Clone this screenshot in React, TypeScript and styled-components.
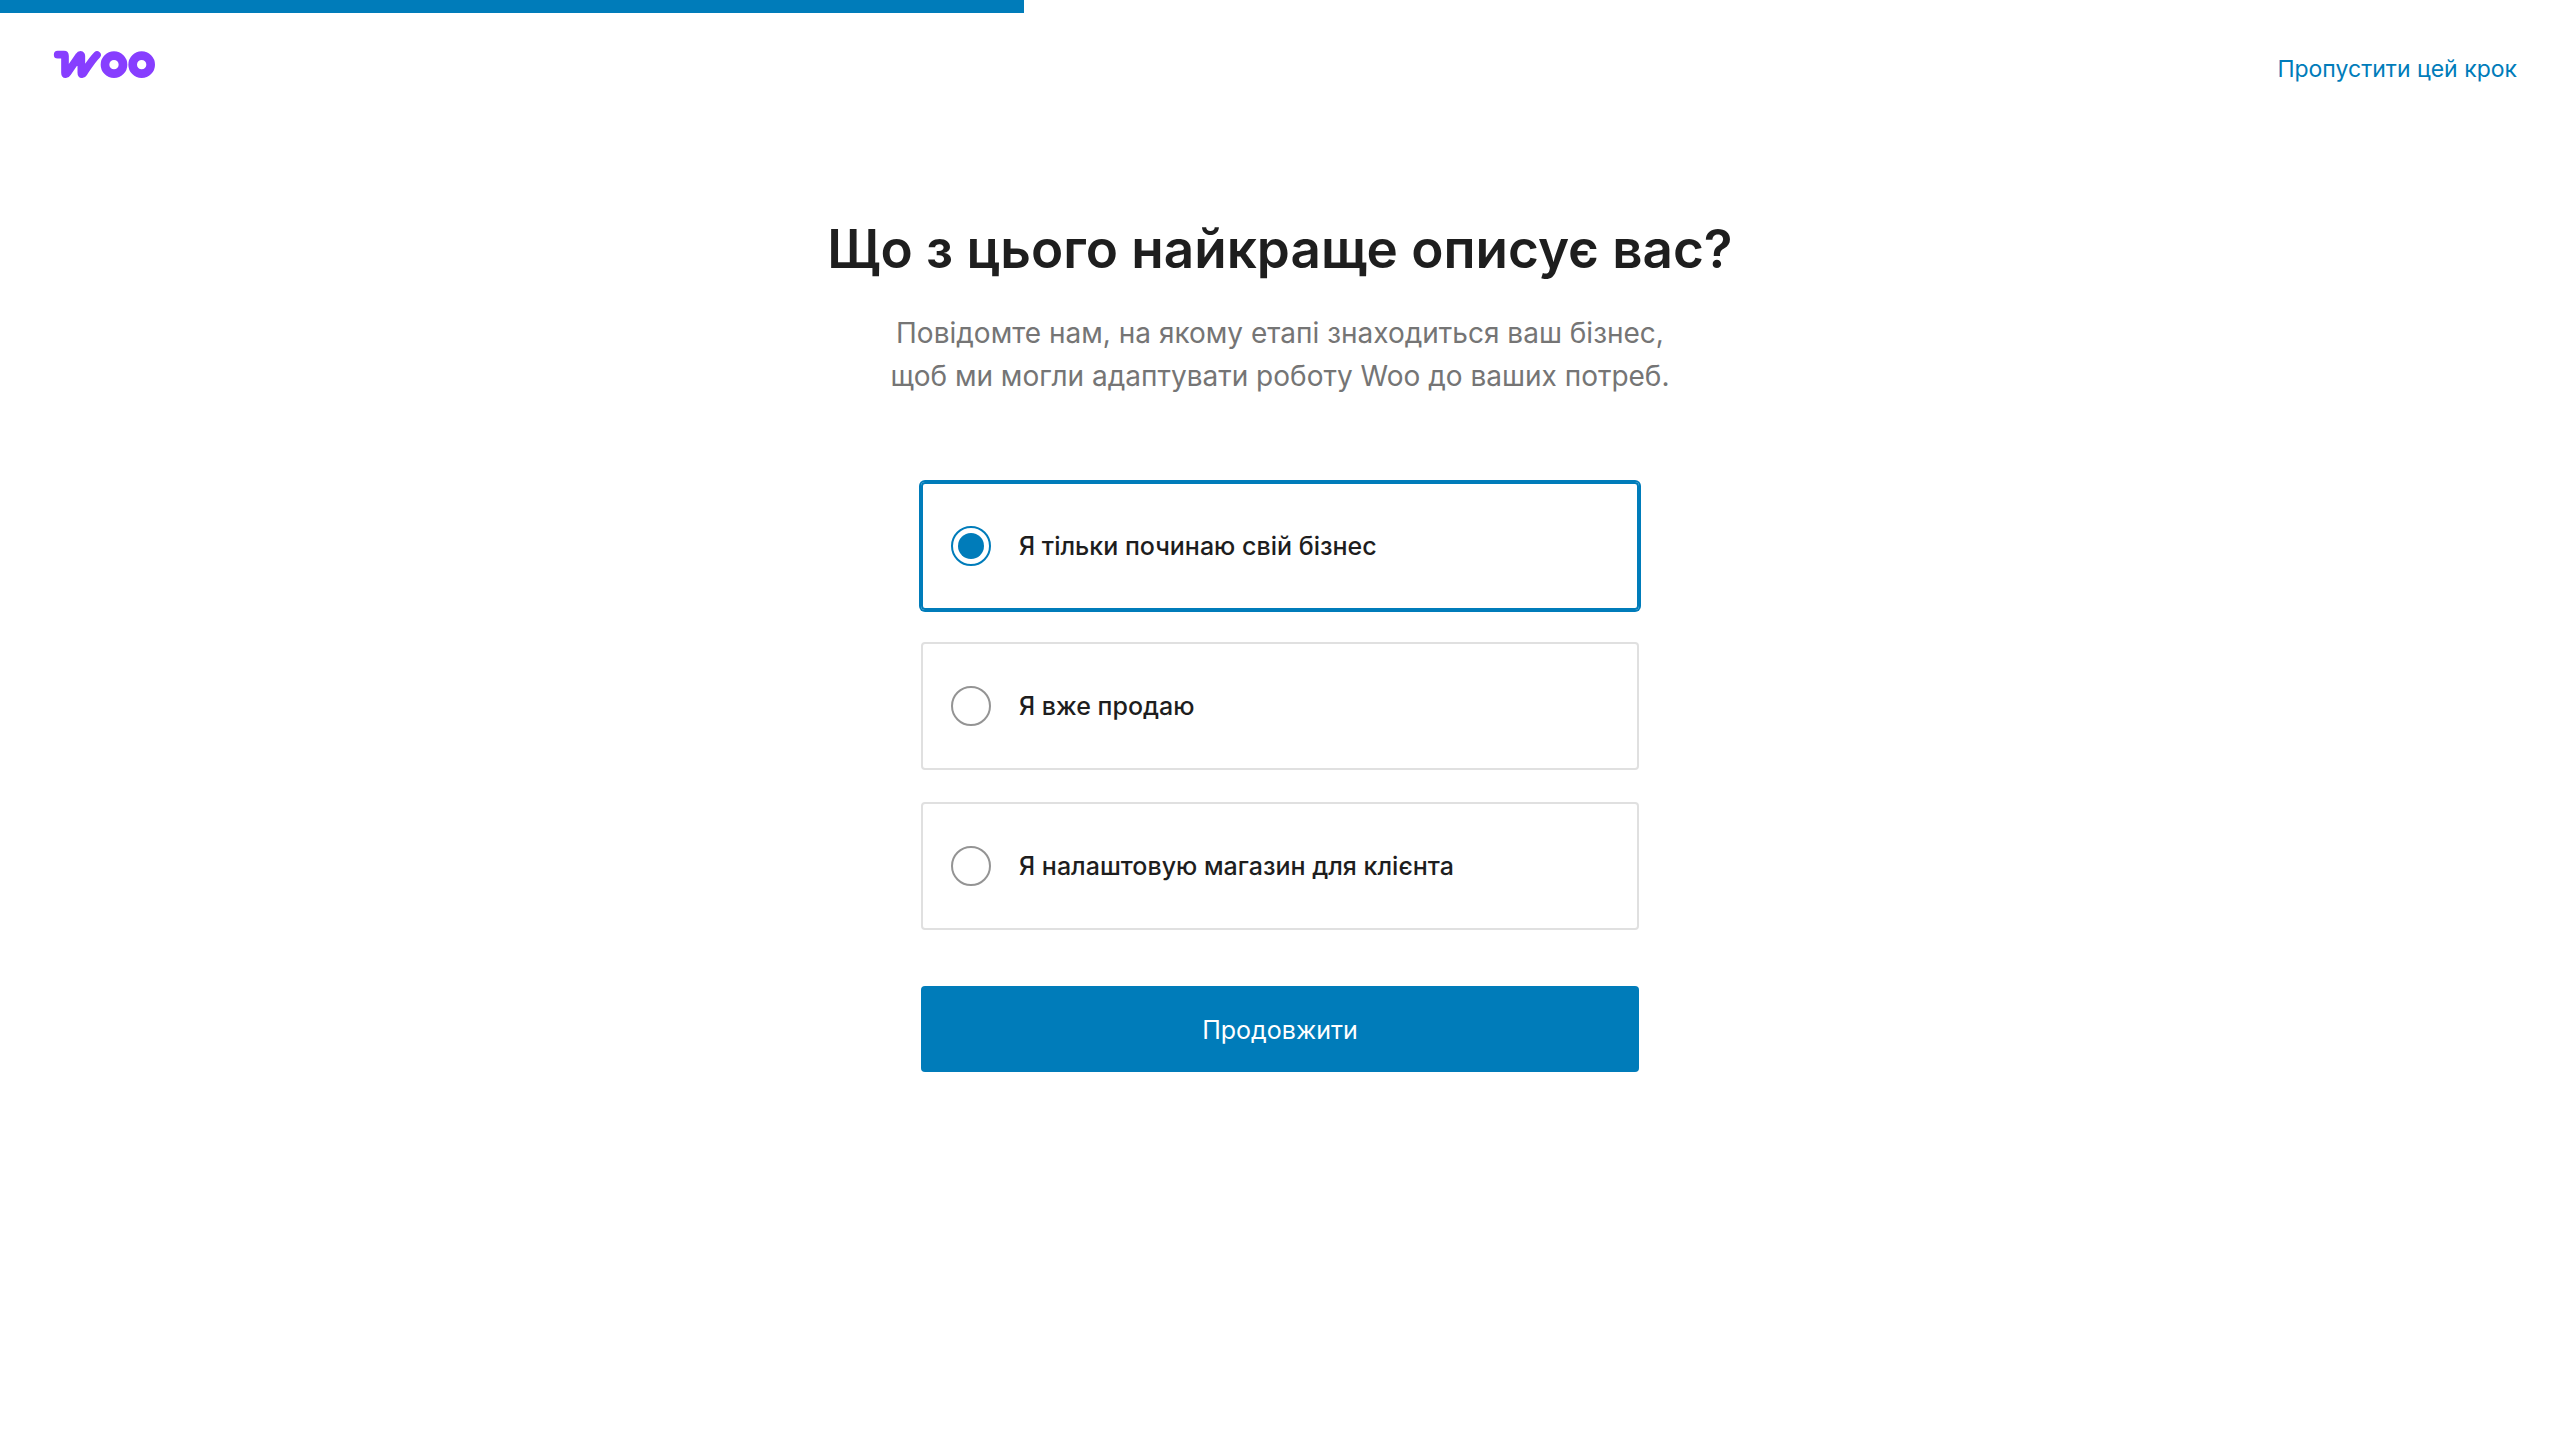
import React, { useState } from "react";
import styled, { createGlobalStyle } from "styled-components";

const blue = "#007cba";
const ink = "#1e1e1e";

const GlobalStyle = createGlobalStyle`
  *, *::before, *::after { box-sizing: border-box; }
  body {
    margin: 0;
    background: #fff;
    color: ${ink};
    font-family: Inter, "Liberation Sans", sans-serif;
  }
`;

const Progress = styled.div`
  height: 13px;
`;

const ProgressFill = styled.div<{ $percent: number }>`
  width: ${(p) => p.$percent}%;
  height: 100%;
  background: ${blue};
`;

const Header = styled.header`
  display: flex;
  justify-content: space-between;
  align-items: flex-start;
  padding: 37px 43px 0 53px;
`;

const Logo = styled.svg`
  display: block;
  width: 103px;
  height: 29px;
`;

const SkipLink = styled.a`
  color: ${blue};
  font-size: 23px;
  line-height: 38px;
  text-decoration: none;
`;

const Main = styled.main`
  display: flex;
  flex-direction: column;
  align-items: center;
  padding: 125px 24px 64px;
`;

const Title = styled.h1`
  margin: 0;
  font-size: 53px;
  font-weight: 600;
  line-height: 72px;
  text-align: center;
`;

const Intro = styled.p`
  max-width: 800px;
  margin: 27px 0 0;
  color: #757575;
  font-size: 28px;
  line-height: 43px;
  text-align: center;
`;

const Form = styled.form`
  display: flex;
  flex-direction: column;
  width: 100%;
  max-width: 718px;
  margin-top: 84px;
`;

const Options = styled.fieldset`
  display: flex;
  flex-direction: column;
  gap: 32px;
  margin: 0;
  padding: 0;
  border: 0;
`;

const Option = styled.label<{ $selected: boolean }>`
  display: flex;
  align-items: center;
  gap: 28px;
  min-height: 128px;
  padding: 0 28px;
  border: 2px solid ${(p) => (p.$selected ? blue : "#e0e0e0")};
  border-radius: 4px;
  box-shadow: ${(p) => (p.$selected ? `0 0 0 2px ${blue}` : "none")};
  font-size: 25px;
  font-weight: 500;
  line-height: 36px;
  cursor: pointer;
`;

const Radio = styled.input`
  display: grid;
  place-items: center;
  flex: none;
  width: 40px;
  height: 40px;
  margin: 0;
  border: 2px solid #949494;
  border-radius: 50%;
  background: #fff;
  appearance: none;

  &:checked {
    border-color: ${blue};
  }

  &:checked::before {
    content: "";
    width: 26px;
    height: 26px;
    border-radius: 50%;
    background: ${blue};
  }
`;

const Submit = styled.button`
  min-height: 86px;
  margin-top: 56px;
  padding: 2px 24px 0;
  border: 0;
  border-radius: 4px;
  background: ${blue};
  color: #fff;
  font: inherit;
  font-size: 25px;
  cursor: pointer;
`;

const choices = [
  { id: "starting", label: "Я тільки починаю свій бізнес" },
  { id: "selling", label: "Я вже продаю" },
  { id: "client", label: "Я налаштовую магазин для клієнта" },
];

function WooLogo() {
  return (
    <Logo viewBox="38 44 309 87" role="img" aria-label="Woo">
      <g fill="none" stroke="#873eff">
        <path
          d="M52 58H71C73 58 74 59 74 62V112C74 118 78 118 81 113L116 62C119 57 123 57 123 62V112C123 118 127 118 130 113C144 92 154 75 170 59"
          strokeWidth="23"
          strokeLinecap="round"
          strokeLinejoin="round"
        />
        <circle cx="221" cy="88" r="27" strokeWidth="26" />
        <circle cx="304" cy="88" r="27" strokeWidth="26" />
      </g>
    </Logo>
  );
}

export default function App() {
  const [selected, setSelected] = useState("starting");

  return (
    <>
      <GlobalStyle />
      <Progress
        role="progressbar"
        aria-label="Woo"
        aria-valuenow={40}
        aria-valuemin={0}
        aria-valuemax={100}
      >
        <ProgressFill $percent={40} />
      </Progress>
      <Header>
        <WooLogo />
        <SkipLink href="#skip">Пропустити цей крок</SkipLink>
      </Header>
      <Main>
        <Title id="profile-title">Що з цього найкраще описує вас?</Title>
        <Intro>
          Повідомте нам, на якому етапі знаходиться ваш бізнес,
          <br />
          щоб ми могли адаптувати роботу Woo до ваших потреб.
        </Intro>
        <Form onSubmit={(event) => event.preventDefault()}>
          <Options aria-labelledby="profile-title">
            {choices.map((choice) => (
              <Option key={choice.id} htmlFor={choice.id} $selected={selected === choice.id}>
                <Radio
                  type="radio"
                  id={choice.id}
                  name="business-stage"
                  checked={selected === choice.id}
                  onChange={() => setSelected(choice.id)}
                />
                {choice.label}
              </Option>
            ))}
          </Options>
          <Submit type="submit">Продовжити</Submit>
        </Form>
      </Main>
    </>
  );
}
